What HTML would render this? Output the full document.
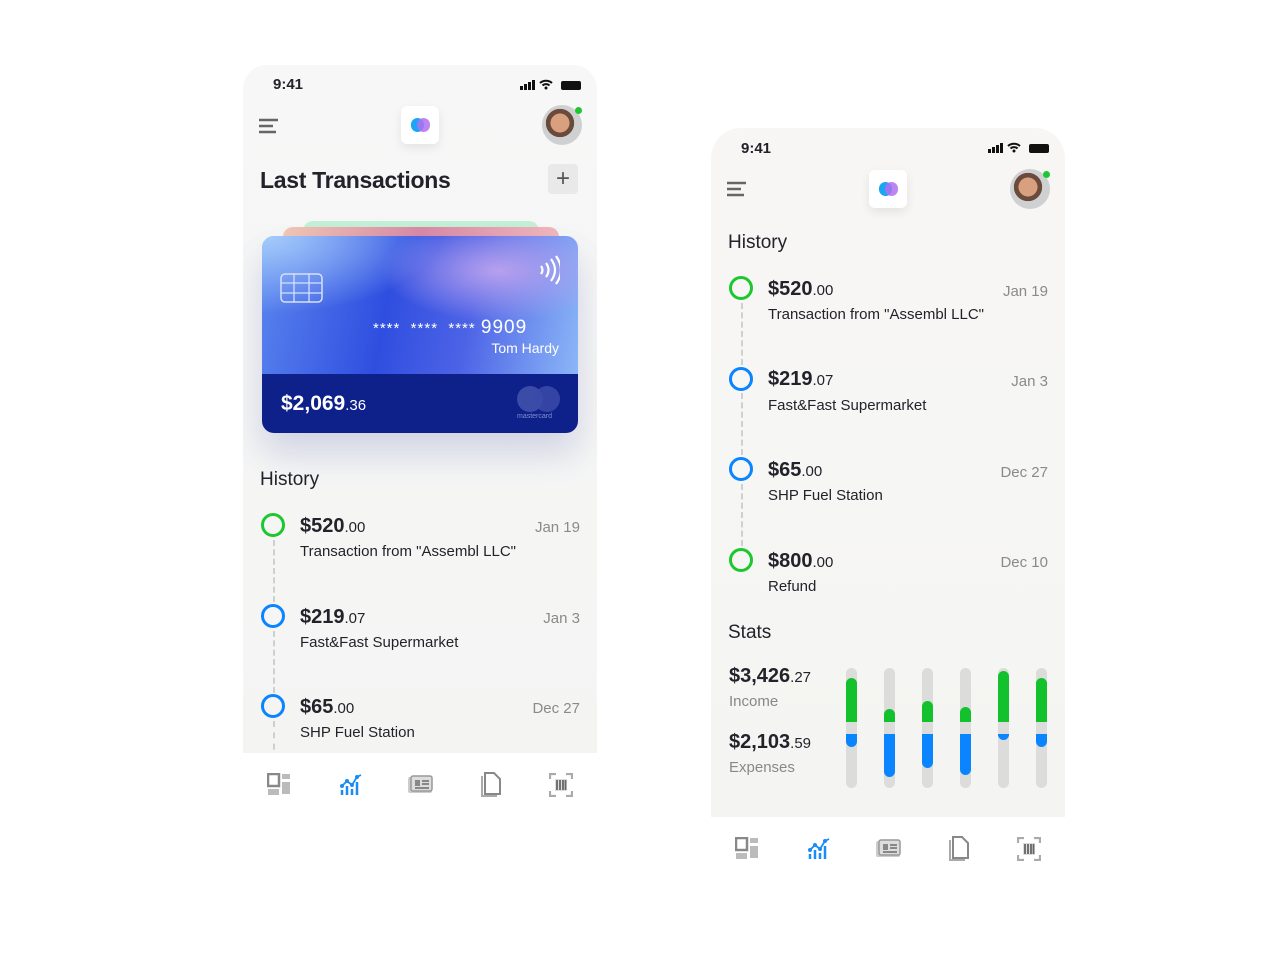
<!DOCTYPE html><html><head><meta charset="utf-8"><style>
*{margin:0;padding:0;box-sizing:border-box}
body{width:1280px;height:960px;background:#fff;font-family:"Liberation Sans",sans-serif;position:relative;overflow:hidden;color:#23222b}
.a{position:absolute}
.phone{position:absolute;background:#f6f6f5;overflow:hidden}
.t{position:absolute;white-space:nowrap}
.amt{font-size:20px;font-weight:bold;color:#23222b}
.amt small{font-size:15px;font-weight:normal}
.desc{font-size:15px;color:#23222b}
.date{font-size:15px;color:#8a8a8a}
.ring{position:absolute;width:24px;height:24px;border-radius:50%;border:3px solid}
.g{border-color:#1ec731}.b{border-color:#0a84ff}
.dash{position:absolute;width:0;border-left:2px dashed #cfcfcf}
.tab{position:absolute;background:#fff;height:64px}
.logo{position:absolute;width:38px;height:38px;background:#fff;border-radius:6px;box-shadow:0 4px 10px rgba(0,0,0,.08)}
.logo:before{content:"";position:absolute;left:10px;top:12px;width:13px;height:14px;border-radius:7px;background:#19a6f5}
.logo:after{content:"";position:absolute;left:16px;top:12px;width:13px;height:14px;border-radius:7px;background:#b070f0;opacity:.85}
.av{position:absolute;width:40px;height:40px;border-radius:50%;background:radial-gradient(circle at 45% 45%,#d9a080 0 30%,#6a4a3a 31% 45%,#cfd0d2 46%)}
.dot{position:absolute;width:7px;height:7px;border-radius:50%;background:#1ec731}
.track{position:absolute;width:11px;height:120px;border-radius:6px;background:#dcdcda}
.gb{position:absolute;width:11px;background:#12c12c;border-radius:6px 6px 0 0}
.bb{position:absolute;width:11px;background:#0a84ff;border-radius:0 0 6px 6px}
</style></head><body>

<!-- LEFT PHONE -->
<div class="phone" style="left:243px;top:65px;width:354px;height:690px;border-radius:24px 24px 0 0;background:linear-gradient(#f7f7f7,#f4f5f3)">
<div class="t" style="left:30px;top:11px;font-size:15px;font-weight:bold">9:41</div>
<svg class="a" style="left:277px;top:14px" width="62" height="12"><rect x="0" y="7" width="3" height="4" fill="#111"/><rect x="4" y="5" width="3" height="6" fill="#111"/><rect x="8" y="3" width="3" height="8" fill="#111"/><rect x="12" y="1" width="3" height="10" fill="#111"/><path d="M20 4a9 9 0 0 1 12 0M22.5 6.5a5 5 0 0 1 7 0" stroke="#111" stroke-width="2" fill="none"/><circle cx="26" cy="9" r="1.5" fill="#111"/><rect x="41" y="2" width="20" height="9" rx="2" fill="#111"/></svg>
<svg class="a" style="left:15px;top:53px" width="22" height="16"><path d="M1 2h19M1 8h14M1 14h17" stroke="#666" stroke-width="2.5"/></svg>
<div class="logo" style="left:158px;top:41px"></div>
<div class="av" style="left:299px;top:40px"></div><div class="dot" style="left:332px;top:42px"></div>
<div class="t" style="left:17px;top:102px;font-size:23px;font-weight:bold;letter-spacing:-.3px">Last Transactions</div>
<div class="a" style="left:305px;top:99px;width:30px;height:30px;border-radius:4px;background:#e9e9ea;color:#555;font-size:24px;text-align:center;line-height:29px">+</div>
<div class="a" style="left:60px;top:156px;width:236px;height:20px;border-radius:10px;background:#c3efd6"></div>
<div class="a" style="left:40px;top:162px;width:276px;height:20px;border-radius:10px;background:linear-gradient(90deg,#f2c8b4,#d98aa6,#f1b8bd)"></div>
<div class="a" style="left:19px;top:171px;width:316px;height:197px;border-radius:12px;overflow:hidden;box-shadow:0 20px 36px rgba(60,70,160,.2)">
<div class="a" style="left:0;top:0;width:316px;height:138px;background:radial-gradient(ellipse at 75% 25%,#b7a0ee 0,rgba(160,140,240,0) 35%),radial-gradient(ellipse at 0% 0%,#a6cdfb 0,rgba(150,200,250,0) 40%),linear-gradient(100deg,#5a84ee 0%,#2f4ee0 40%,#4d63e6 65%,#8bb7f7 100%)"></div>
<svg class="a" style="left:18px;top:37px" width="44" height="30"><rect x="1" y="1" width="41" height="28" rx="4" fill="none" stroke="#d6e0fb" stroke-width="1.5"/><path d="M1 10h41M1 20h41M14 1v28M29 1v28" stroke="#d6e0fb" stroke-width="1.3"/></svg>
<svg class="a" style="left:276px;top:19px" width="22" height="30"><path d="M3 11q3 4 0 8M8 8q5 7 0 14M13 4q8 11 0 22M18 1q10 14 0 28" stroke="#fff" stroke-width="2.2" fill="none"/></svg>
<div class="t" style="left:111px;top:81px;color:#fff;font-size:15px;letter-spacing:1px">**** &nbsp;**** &nbsp;**** <span style="font-size:19px">9909</span></div>
<div class="t" style="right:19px;top:104px;color:#fff;font-size:14px">Tom Hardy</div>
<div class="a" style="left:0;top:138px;width:316px;height:59px;background:#0e208a"></div>
<div class="t" style="left:19px;top:156px;color:#fff;font-size:21px;font-weight:bold">$2,069<span style="font-size:15px;font-weight:normal">.36</span></div>
<div class="a" style="left:255px;top:150px;width:26px;height:26px;border-radius:50%;background:#3a4ba8"></div>
<div class="a" style="left:272px;top:150px;width:26px;height:26px;border-radius:50%;background:#3a4ba8;opacity:.85"></div>
<div class="t" style="left:255px;top:177px;color:#8090d0;font-size:7px">mastercard</div>
</div>
<div class="t" style="left:17px;top:404px;font-size:19px">History</div>
<div class="dash" style="left:30px;top:475px;height:62px"></div>
<div class="dash" style="left:30px;top:566px;height:62px"></div>
<div class="dash" style="left:30px;top:656px;height:40px"></div>
<div class="ring g" style="left:18px;top:448px"></div>
<div class="t amt" style="left:57px;top:450px">$520<small>.00</small></div><div class="t date" style="right:17px;top:454px">Jan 19</div>
<div class="t desc" style="left:57px;top:478px">Transaction from "Assembl LLC"</div>
<div class="ring b" style="left:18px;top:539px"></div>
<div class="t amt" style="left:57px;top:541px">$219<small>.07</small></div><div class="t date" style="right:17px;top:545px">Jan 3</div>
<div class="t desc" style="left:57px;top:569px">Fast&amp;Fast Supermarket</div>
<div class="ring b" style="left:18px;top:629px"></div>
<div class="t amt" style="left:57px;top:631px">$65<small>.00</small></div><div class="t date" style="right:17px;top:635px">Dec 27</div>
<div class="t desc" style="left:57px;top:659px">SHP Fuel Station</div>
</div>
<div class="tab" style="left:243px;top:753px;width:354px"></div>

<!-- RIGHT PHONE -->
<div class="phone" style="left:711px;top:128px;width:354px;height:690px;border-radius:30px 30px 0 0;background:linear-gradient(#f8f6f5,#f4f5f2)">
<div class="t" style="left:30px;top:12px;font-size:15px;font-weight:bold">9:41</div>
<svg class="a" style="left:277px;top:14px" width="62" height="12"><rect x="0" y="7" width="3" height="4" fill="#111"/><rect x="4" y="5" width="3" height="6" fill="#111"/><rect x="8" y="3" width="3" height="8" fill="#111"/><rect x="12" y="1" width="3" height="10" fill="#111"/><path d="M20 4a9 9 0 0 1 12 0M22.5 6.5a5 5 0 0 1 7 0" stroke="#111" stroke-width="2" fill="none"/><circle cx="26" cy="9" r="1.5" fill="#111"/><rect x="41" y="2" width="20" height="9" rx="2" fill="#111"/></svg>
<svg class="a" style="left:15px;top:53px" width="22" height="16"><path d="M1 2h19M1 8h14M1 14h17" stroke="#666" stroke-width="2.5"/></svg>
<div class="logo" style="left:158px;top:42px"></div>
<div class="av" style="left:299px;top:41px"></div><div class="dot" style="left:332px;top:43px"></div>
<div class="t" style="left:17px;top:104px;font-size:19px">History</div>
<div class="dash" style="left:30px;top:175px;height:62px"></div>
<div class="dash" style="left:30px;top:265px;height:62px"></div>
<div class="dash" style="left:30px;top:356px;height:62px"></div>
<div class="ring g" style="left:18px;top:148px"></div>
<div class="t amt" style="left:57px;top:150px">$520<small>.00</small></div><div class="t date" style="right:17px;top:155px">Jan 19</div>
<div class="t desc" style="left:57px;top:178px">Transaction from "Assembl LLC"</div>
<div class="ring b" style="left:18px;top:239px"></div>
<div class="t amt" style="left:57px;top:240px">$219<small>.07</small></div><div class="t date" style="right:17px;top:245px">Jan 3</div>
<div class="t desc" style="left:57px;top:269px">Fast&amp;Fast Supermarket</div>
<div class="ring b" style="left:18px;top:329px"></div>
<div class="t amt" style="left:57px;top:331px">$65<small>.00</small></div><div class="t date" style="right:17px;top:336px">Dec 27</div>
<div class="t desc" style="left:57px;top:359px">SHP Fuel Station</div>
<div class="ring g" style="left:18px;top:420px"></div>
<div class="t amt" style="left:57px;top:422px">$800<small>.00</small></div><div class="t date" style="right:17px;top:426px">Dec 10</div>
<div class="t desc" style="left:57px;top:450px">Refund</div>
<div class="t" style="left:17px;top:494px;font-size:19px">Stats</div>
<div class="t amt" style="left:18px;top:537px">$3,426<small>.27</small></div>
<div class="t" style="left:18px;top:565px;font-size:15px;color:#888">Income</div>
<div class="t amt" style="left:18px;top:603px">$2,103<small>.59</small></div>
<div class="t" style="left:18px;top:631px;font-size:15px;color:#888">Expenses</div>
</div>
<div class="tab" style="left:711px;top:817px;width:354px"></div>

<div class="track" style="left:846px;top:668px"></div><div class="gb" style="left:846px;top:678px;height:44px"></div><div class="bb" style="left:846px;top:734px;height:13px"></div>
<div class="track" style="left:884px;top:668px"></div><div class="gb" style="left:884px;top:709px;height:13px"></div><div class="bb" style="left:884px;top:734px;height:43px"></div>
<div class="track" style="left:922px;top:668px"></div><div class="gb" style="left:922px;top:701px;height:21px"></div><div class="bb" style="left:922px;top:734px;height:34px"></div>
<div class="track" style="left:960px;top:668px"></div><div class="gb" style="left:960px;top:707px;height:15px"></div><div class="bb" style="left:960px;top:734px;height:41px"></div>
<div class="track" style="left:998px;top:668px"></div><div class="gb" style="left:998px;top:671px;height:51px"></div><div class="bb" style="left:998px;top:734px;height:6px"></div>
<div class="track" style="left:1036px;top:668px"></div><div class="gb" style="left:1036px;top:678px;height:44px"></div><div class="bb" style="left:1036px;top:734px;height:13px"></div>

<svg width="0" height="0" style="position:absolute"><defs>
<g id="i1"><rect x="1" y="1" width="11" height="12" fill="none" stroke="#888" stroke-width="2.5"/><rect x="15" y="1" width="8" height="5" fill="#bbb"/><rect x="15" y="9" width="8" height="12" fill="#bbb"/><rect x="1" y="16" width="11" height="6" fill="#bbb"/></g>
<g id="i2"><path d="M3 14l5-5 5 4 5-8 4-2" stroke="#1a8cf5" stroke-width="1.8" fill="none"/><circle cx="3" cy="14" r="2" fill="#1a8cf5"/><circle cx="8" cy="9" r="2" fill="#1a8cf5"/><circle cx="13" cy="13" r="2" fill="#1a8cf5"/><circle cx="18" cy="5" r="2" fill="#1a8cf5"/><path d="M3 18v5M8 14v9M13 17v6M18 10v13" stroke="#1a8cf5" stroke-width="2.5"/></g>
<g id="i3"><rect x="0" y="4" width="24" height="16" rx="2" fill="#ccc"/><rect x="3" y="3" width="21" height="15" rx="2" fill="#ddd" stroke="#999" stroke-width="1.5"/><rect x="7" y="7" width="5" height="6" fill="#888"/><path d="M14 8h7M14 11h7M7 15h14" stroke="#888" stroke-width="2"/></g>
<g id="i4"><path d="M3 4v20h15" stroke="#aaa" stroke-width="2" fill="none"/><path d="M6 1h9l6 6v15H6z" fill="#fff" stroke="#888" stroke-width="2"/></g>
<g id="i5"><path d="M1 6V1h6M17 1h6v5M23 18v5h-6M7 23H1v-5" stroke="#aaa" stroke-width="2.2" fill="none"/><rect x="6" y="6" width="12" height="12" fill="#ddd"/><path d="M8 7v10M11 7v10M14 7v10M16.5 7v10" stroke="#666" stroke-width="1.8"/></g>
</defs></svg>
<svg class="a" style="left:267px;top:773px" width="24" height="24"><use href="#i1"/></svg>
<svg class="a" style="left:339px;top:772px" width="24" height="26"><use href="#i2"/></svg>
<svg class="a" style="left:408px;top:773px" width="25" height="24"><use href="#i3"/></svg>
<svg class="a" style="left:479px;top:772px" width="24" height="26"><use href="#i4"/></svg>
<svg class="a" style="left:549px;top:773px" width="24" height="24"><use href="#i5"/></svg>
<svg class="a" style="left:735px;top:837px" width="24" height="24"><use href="#i1"/></svg>
<svg class="a" style="left:807px;top:836px" width="24" height="26"><use href="#i2"/></svg>
<svg class="a" style="left:876px;top:837px" width="25" height="24"><use href="#i3"/></svg>
<svg class="a" style="left:947px;top:836px" width="24" height="26"><use href="#i4"/></svg>
<svg class="a" style="left:1017px;top:837px" width="24" height="24"><use href="#i5"/></svg>
</body></html>
